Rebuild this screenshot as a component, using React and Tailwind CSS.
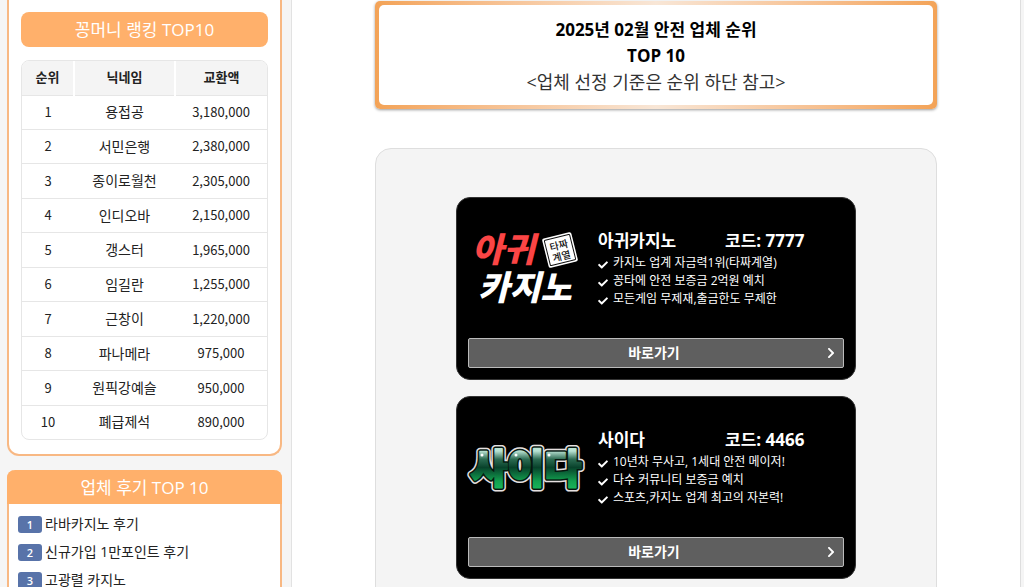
import React from 'react';
import { FaCheck, FaChevronRight } from 'react-icons/fa';

const ranking = [
  { name: '용접공', amount: '3,180,000' },
  { name: '서민은행', amount: '2,380,000' },
  { name: '종이로월천', amount: '2,305,000' },
  { name: '인디오바', amount: '2,150,000' },
  { name: '갱스터', amount: '1,965,000' },
  { name: '임길란', amount: '1,255,000' },
  { name: '근창이', amount: '1,220,000' },
  { name: '파나메라', amount: '975,000' },
  { name: '원픽강예슬', amount: '950,000' },
  { name: '폐급제석', amount: '890,000' },
];

const reviews = ['라바카지노 후기', '신규가입 1만포인트 후기', '고광렬 카지노'];

const sites = [
  {
    name: '아귀카지노',
    code: '7777',
    logo: <AgwiLogo />,
    features: ['카지노 업계 자금력1위(타짜계열)', '꽁타에 안전 보증금 2억원 예치', '모든게임 무제재,출금한도 무제한'],
  },
  {
    name: '사이다',
    code: '4466',
    logo: <CiderLogo />,
    features: ['10년차 무사고, 1세대 안전 메이저!', '다수 커뮤니티 보증금 예치', '스포츠,카지노 업계 최고의 자본력!'],
  },
];

function AgwiLogo() {
  return (
    <svg viewBox="0 0 118 96" className="w-full overflow-visible font-black italic" role="img" aria-label="아귀카지노">
      <text x="4" y="38" fontSize="34" fill="#fb4545">아귀</text>
      <text x="10" y="76" fontSize="34" fill="#fff">카지노</text>
      <g transform="rotate(-14 92 26)" className="not-italic">
        <rect x="77" y="11" width="30" height="30" rx="2" fill="#fff" />
        <rect x="79" y="13" width="26" height="26" rx="1" fill="#fff" stroke="#111" strokeWidth="1" />
        <text x="92" y="25" fontSize="10" fontWeight="500" textAnchor="middle" fill="#111">타짜</text>
        <text x="92" y="36" fontSize="10" fontWeight="500" textAnchor="middle" fill="#111">계열</text>
      </g>
    </svg>
  );
}

function CiderLogo() {
  return (
    <svg viewBox="0 0 118 96" className="w-full overflow-visible font-black" role="img" aria-label="사이다">
      <defs>
        <linearGradient id="cider" x1="0" y1="0" x2="0" y2="1">
          <stop offset="0.2" stopColor="#b9e2d3" />
          <stop offset="0.35" stopColor="#2c6b52" />
          <stop offset="0.5" stopColor="#08422b" />
          <stop offset="0.75" stopColor="#12a04f" />
          <stop offset="1" stopColor="#1fc463" />
        </linearGradient>
      </defs>
      <g fontSize="40" textAnchor="middle" strokeLinejoin="round">
        <text x="58" y="60" fill="#e6e0e0" stroke="#e6e0e0" strokeWidth="8" aria-hidden="true">사이다</text>
        <text x="58" y="60" fill="#06170f" stroke="#06170f" strokeWidth="5" aria-hidden="true">사이다</text>
        <text x="58" y="60" fill="url(#cider)" stroke="url(#cider)" strokeWidth="2">사이다</text>
      </g>
      <g fill="#fff">
        <circle cx="14" cy="32" r="1.5" />
        <circle cx="48" cy="32" r="1.5" />
        <circle cx="81" cy="32" r="1.5" />
      </g>
    </svg>
  );
}

function RankingCard() {
  return (
    <section className="rounded-b-xl border-2 border-t-0 border-[#f8b883] bg-white px-3 pt-3 pb-[14px]">
      <h2 className="rounded-lg bg-[#ffb06b] text-center text-[17px] leading-[35px] text-white">꽁머니 랭킹 TOP10</h2>
      <div className="mt-[13px] overflow-hidden rounded-lg border border-[#e6e6e6]">
        <table className="w-full table-fixed border-collapse text-center text-sm text-[#222]">
          <thead>
            <tr className="h-[34px] border-b border-[#e6e6e6] bg-[#f4f4f4] text-[13px]">
              <th className="w-[52px] border-r-2 border-white font-bold">순위</th>
              <th className="border-r-2 border-white font-bold">닉네임</th>
              <th className="w-[92px] font-bold">교환액</th>
            </tr>
          </thead>
          <tbody className="h-[344px]">
            {ranking.map((row, i) => (
              <tr key={row.name} className="border-b border-[#e6e6e6] last:border-b-0">
                <td className="font-['Noto_Sans_CJK_KR',sans-serif] text-[13px]">{i + 1}</td>
                <td>{row.name}</td>
                <td className="font-['Noto_Sans_CJK_KR',sans-serif] text-[13px]">{row.amount}</td>
              </tr>
            ))}
          </tbody>
        </table>
      </div>
    </section>
  );
}

function ReviewCard() {
  return (
    <section className="mt-[14px] rounded-t-lg border-x-2 border-[#f8b883] bg-white">
      <h2 className="-mx-[2px] rounded-t-lg bg-[#ffb06b] pt-[2px] text-center text-[17px] leading-8 text-white">업체 후기 TOP 10</h2>
      <ol className="px-[9px] py-[6px]">
        {reviews.map((title, i) => (
          <li key={title} className="flex h-7 items-center gap-[3px]">
            <span className="w-6 rounded-[3px] bg-[#5873a9] text-center text-[11px] leading-[17px] font-semibold text-white">
              {i + 1}
            </span>
            <a href="#" className="text-sm text-[#222]">{title}</a>
          </li>
        ))}
      </ol>
    </section>
  );
}

function SiteCard({ site }) {
  return (
    <article className="flex h-[183px] flex-col justify-between rounded-[14px] border border-[#333] bg-black px-[11px] pb-[11px] text-white">
      <div className="flex gap-3 pt-[26px]">
        <div className="w-[118px] shrink-0">{site.logo}</div>
        <div className="flex-1 pt-[5px]">
          <h3 className="flex text-[17px] leading-6 font-bold">
            <span className="w-[127px]">{site.name}</span>
            <span>코드: {site.code}</span>
          </h3>
          <ul className="mt-px text-xs leading-[18px]">
            {site.features.map((feature) => (
              <li key={feature} className="flex items-center gap-[5px]">
                <FaCheck className="mt-1 size-[10px] shrink-0" />
                {feature}
              </li>
            ))}
          </ul>
        </div>
      </div>
      <button className="flex h-[30px] items-center rounded-[2px] border border-[#bbb] bg-[#5f5f5f] px-[6px] text-sm font-bold">
        <span className="flex-1 pl-2">바로가기</span>
        <FaChevronRight className="size-3" />
      </button>
    </article>
  );
}

export default function App() {
  return (
    <div className="flex h-screen overflow-hidden bg-[#f5f5f5] font-['Open_Sans','Noto_Sans_CJK_KR',sans-serif]">
      <aside className="w-[292px] shrink-0 border-r border-[#e2e2e2] pr-[9px] pl-[7px]">
        <RankingCard />
        <ReviewCard />
      </aside>

      <main className="mr-[3px] flex-1 border-r border-[#dedede] bg-white pt-px">
        <div className="mx-auto w-full max-w-[562px]">
          <header className="rounded-[5px] bg-linear-to-r from-[#f3a357] via-[#f8e6d6] to-[#f3a357] p-1 shadow-[0_1px_3px_rgba(0,0,0,0.4)]">
            <div className="rounded-[5px] bg-white pt-3 pb-[10px] text-center">
              <h1 className="text-[17px] leading-[26px] font-bold text-black">
                2025년 02월 안전 업체 순위
                <br />
                TOP 10
              </h1>
              <p className="text-lg leading-[26px] text-[#333]">&lt;업체 선정 기준은 순위 하단 참고&gt;</p>
            </div>
          </header>

          <section className="mt-[39px] rounded-2xl border border-[#dedede] bg-[#f4f4f4] py-12">
            <div className="mx-auto flex max-w-[400px] flex-col gap-4">
              {sites.map((site) => (
                <SiteCard key={site.name} site={site} />
              ))}
            </div>
          </section>
        </div>
      </main>
    </div>
  );
}
